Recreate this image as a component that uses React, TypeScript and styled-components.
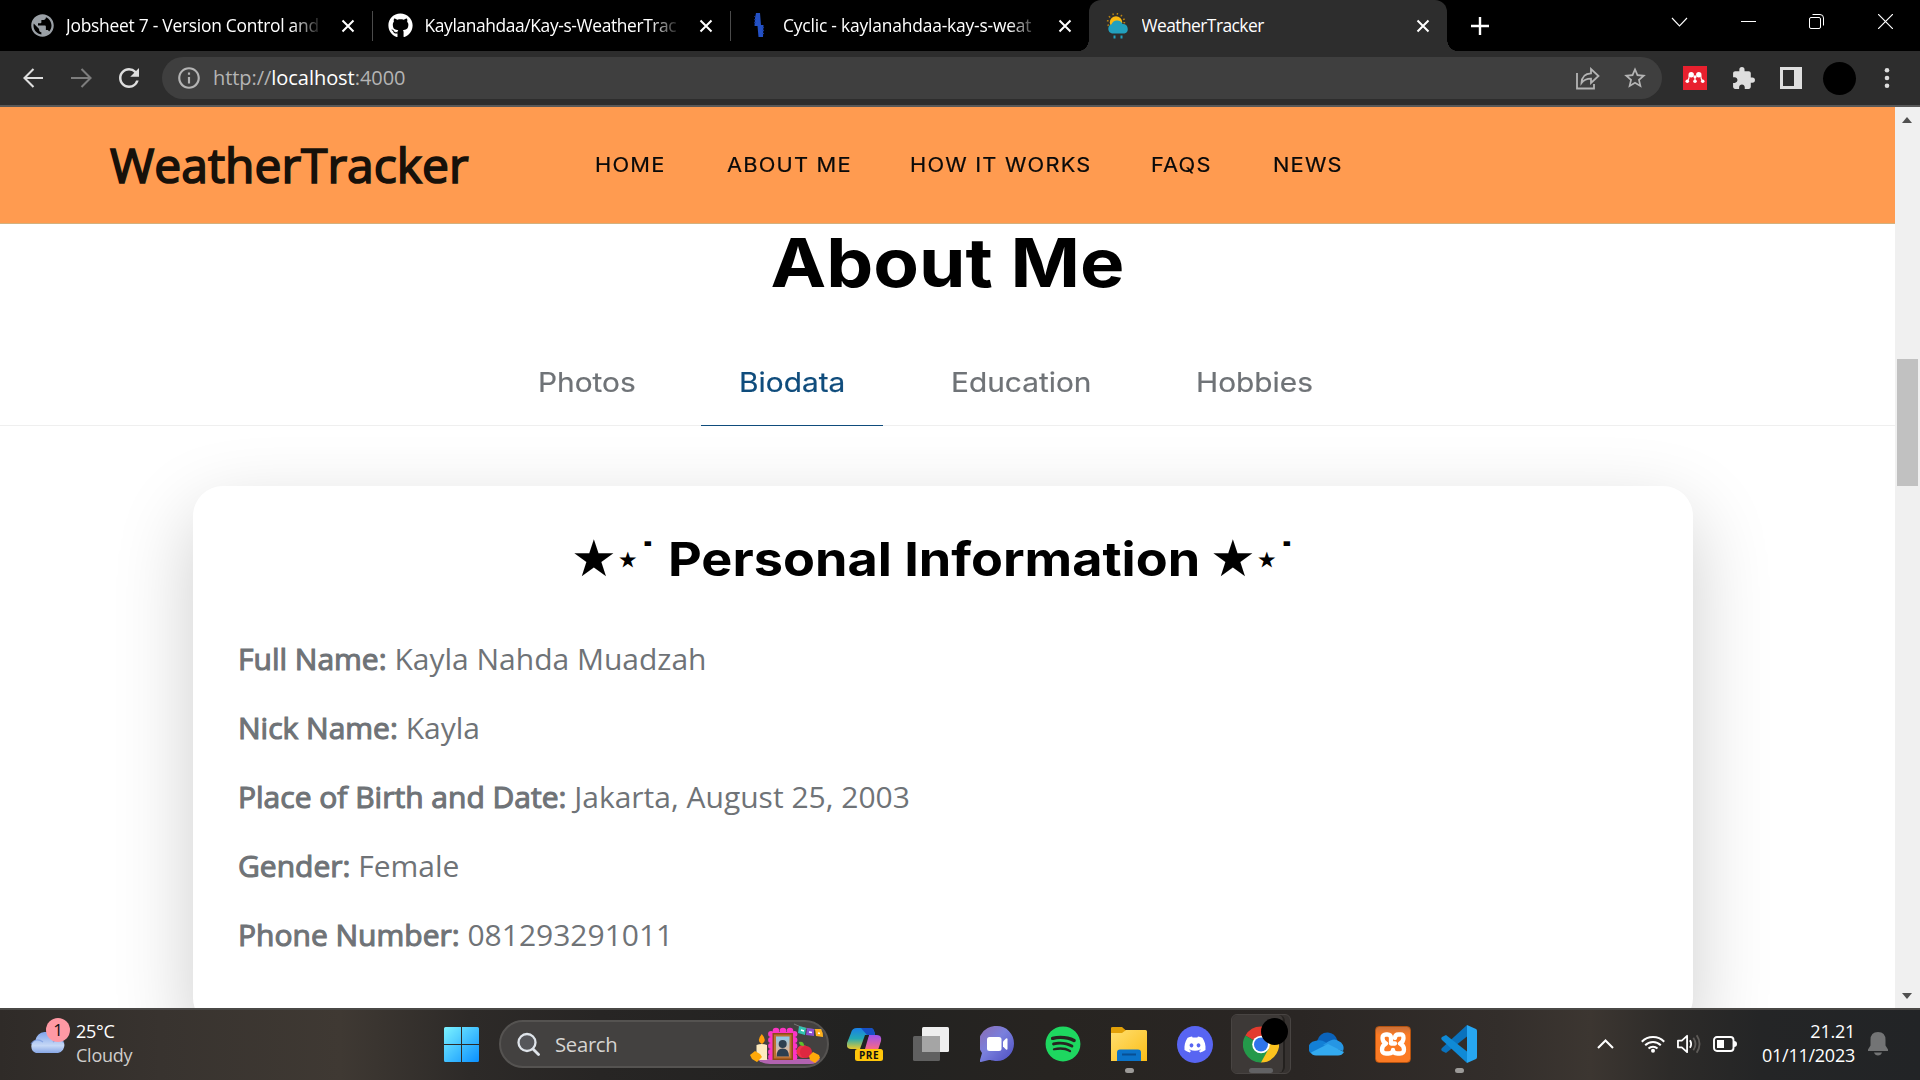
import React from "react";
import styled, { createGlobalStyle, css } from "styled-components";
import { FaGithub, FaSpotify, FaDiscord } from "react-icons/fa";
import { MdPublic, MdExtension, MdRefresh, MdStarBorder, MdInfoOutline } from "react-icons/md";

const ui = `"Open Sans", "Noto Sans", sans-serif`;
const display = `Inter, "Noto Sans", sans-serif`;

const GlobalStyle = createGlobalStyle`
  * { box-sizing: border-box; }
  html, body { margin: 0; padding: 0; background: #000; overflow: hidden; }
  svg { display: block; flex: none; }
`;

const Screen = styled.div`
  width: 1920px;
  height: 1080px;
  display: flex;
  flex-direction: column;
  overflow: hidden;
  font-family: ${ui};
`;

/* ---------- browser chrome ---------- */

const TabStrip = styled.div`
  height: 51px;
  flex: none;
  display: flex;
  background: #000;
  color: #fff;
  padding-left: 13px;
`;

const BrowserTab = styled.div<{ $active?: boolean; $rule?: boolean }>`
  position: relative;
  width: 358.5px;
  height: 51px;
  flex: none;
  display: flex;
  align-items: center;
  padding: 0 17px 0 15px;
  ${(p) =>
    p.$active &&
    css`
      background: #2d2d2d;
      border-radius: 12px 12px 0 0;
      &::before,
      &::after {
        content: "";
        position: absolute;
        bottom: 0;
        width: 10px;
        height: 12px;
      }
      &::before {
        left: -10px;
        background: radial-gradient(ellipse 10px 12px at 0 0, #000 97%, #2d2d2d);
      }
      &::after {
        right: -10px;
        background: radial-gradient(ellipse 10px 12px at 100% 0, #000 97%, #2d2d2d);
      }
    `}
  ${(p) =>
    p.$rule &&
    css`
      &::after {
        content: "";
        position: absolute;
        right: -1px;
        top: 11px;
        width: 1px;
        height: 30px;
        background: #4b4b4b;
      }
    `}
`;

const Favicon = styled.span`
  width: 28px;
  height: 28px;
  flex: none;
  display: flex;
  align-items: center;
  justify-content: center;
  margin-right: 10px;
`;

const TabTitle = styled.span<{ $fade?: boolean; $track: number }>`
  width: 260px;
  overflow: hidden;
  white-space: nowrap;
  font-size: 17.4px;
  letter-spacing: ${(p) => p.$track}px;
  line-height: 28px;
  margin: -1px 21px 0 0;
  ${(p) => p.$fade && css`mask-image: linear-gradient(90deg, #000 89%, rgba(0, 0, 0, 0.1) 100%);`}
`;

const NewTab = styled.div`
  width: 66px;
  display: flex;
  align-items: center;
  justify-content: center;
`;

const WindowControls = styled.div`
  margin-left: auto;
  height: 43px;
  display: flex;
`;

const WindowButton = styled.span`
  width: 68.7px;
  display: flex;
  align-items: center;
  justify-content: center;
`;

const Toolbar = styled.div`
  height: 56px;
  flex: none;
  display: flex;
  align-items: center;
  background: #2d2d2d;
  border-bottom: 2px solid #585858;
  padding: 0 20px 0 20px;
`;

const NavIcons = styled.div`
  display: flex;
  width: 142px;
  gap: 19px;
  align-items: center;
  color: #dedede;
`;

const AddressBar = styled.div`
  width: 1500px;
  height: 42px;
  flex: none;
  border-radius: 21px;
  background: #3f3f3f;
  display: flex;
  align-items: center;
  padding: 0 14px 0 14px;
  color: #b4b4b4;
`;

const Url = styled.span`
  flex: 1;
  margin-left: 11px;
  font-size: 20px;
  letter-spacing: -0.05px;
  line-height: 40px;
  white-space: nowrap;
  b {
    font-weight: 400;
    color: #fff;
  }
`;

const AddressActions = styled.span`
  display: flex;
  align-items: center;
  gap: 22px;
`;

const Extensions = styled.div`
  display: flex;
  align-items: center;
  margin-left: 21px;
  color: #dedede;
`;

const ExtensionSlot = styled.span<{ $w: number }>`
  width: ${(p) => p.$w}px;
  display: flex;
`;

const Avatar = styled.span`
  width: 33px;
  height: 33px;
  border-radius: 50%;
  background: #000;
`;

/* ---------- page ---------- */

const Viewport = styled.div`
  height: 901px;
  flex: none;
  display: flex;
  background: #fff;
  overflow: hidden;
`;

const Page = styled.div`
  width: 1895px;
  height: 901px;
  flex: none;
  overflow: hidden;
`;

const SiteHeader = styled.header`
  height: 117px;
  display: flex;
  align-items: center;
  background: #ff9b50;
  border-bottom: 1px solid #d3b27f;
  padding-left: 110px;
`;

const Logo = styled.div`
  width: 485px;
  font-size: 48px;
  line-height: 60px;
  color: #17110a;
  -webkit-text-stroke: 1.7px #17110a;
`;

const Nav = styled.nav`
  display: flex;
  gap: 61px;
`;

const NavLink = styled.a<{ $w: number }>`
  width: ${(p) => p.$w}px;
  font: 400 20px/30px ${display};
  letter-spacing: 1.1px;
  color: #0a0a0a;
  -webkit-text-stroke: 0.2px #0a0a0a;
  white-space: nowrap;
  transform: scaleX(1.09);
  transform-origin: left;
`;

const Title = styled.h1`
  margin: -1px 0 0;
  height: 121px;
  font: 700 67.5px/80px ${display};
  text-align: center;
  transform: scaleX(1.105);
  color: #000;
`;

const SectionTabs = styled.div`
  height: 82px;
  display: flex;
  gap: 30px;
  padding-left: 500px;
  border-bottom: 1px solid #efefef;
`;

const SectionTab = styled.div<{ $w: number; $active?: boolean }>`
  width: ${(p) => p.$w}px;
  height: 82px;
  padding-left: 37.5px;
  font: 400 27px/77px ${display};
  color: ${(p) => (p.$active ? "#0f4c7c" : "#6f7377")};
  border-bottom: 1px solid ${(p) => (p.$active ? "#0f4c7c" : "transparent")};
  -webkit-text-stroke: 0.2px currentColor;
  span {
    display: inline-block;
    transform: scaleX(1.105);
    transform-origin: left;
  }
`;

const Card = styled.section`
  width: 1500px;
  height: 542px;
  margin: 60px 0 0 193px;
  padding: 40px 45px;
  border-radius: 30px;
  background: #fff;
  box-shadow: 0 28px 80px rgba(0, 0, 0, 0.2);
`;

const CardHeading = styled.h2`
  margin: 0 0 32px;
  padding-left: 333px;
  height: 66px;
  display: flex;
  align-items: center;
  color: #000;
  white-space: nowrap;
  line-height: 66px;
`;

const HeadingText = styled.span`
  width: 542px;
  font: 700 47px/66px ${display};
  transform: scaleX(1.11);
  transform-origin: left;
`;

const BigStar = styled.span`
  width: 43px;
  font: 400 51px/66px "DejaVu Sans", sans-serif;
`;

const SmallStar = styled.span`
  width: 26px;
  font: 400 44px/66px "DejaVu Sans", sans-serif;
`;

const Dot = styled.span`
  width: 28px;
  font: 700 47px/66px "Liberation Sans", sans-serif;
`;

const Field = styled.p`
  margin: 0;
  height: 69px;
  font-size: 30px;
  line-height: 69px;
  font-weight: 400;
  color: #6f7377;
  white-space: nowrap;
  b {
    font-weight: 400;
    -webkit-text-stroke: 1.1px #6f7377;
  }
`;

const Scrollbar = styled.div`
  width: 25px;
  height: 901px;
  background: #f0f0f0;
  display: flex;
  flex-direction: column;
  align-items: center;
  padding: 10px 1px 9px 0;
`;

const Thumb = styled.div`
  width: 21px;
  height: 127px;
  margin: 236px 0 auto 1px;
  background: #c1c1c1;
`;

const Arrow = styled.span<{ $down?: boolean }>`
  width: 0;
  height: 0;
  border: 5.5px solid transparent;
  border-top-width: ${(p) => (p.$down ? 6 : 0)}px;
  border-bottom-width: ${(p) => (p.$down ? 0 : 6)}px;
  ${(p) => (p.$down ? "border-top-color" : "border-bottom-color")}: #505050;
`;

/* ---------- taskbar ---------- */

const Taskbar = styled.div`
  height: 72px;
  flex: none;
  display: flex;
  align-items: center;
  padding-bottom: 2px;
  border-top: 2px solid #4a4846;
  background: linear-gradient(
    90deg,
    #2f2b28 0, #38332f 160px, #3f3933 340px, #2d2a28 470px, #272524 600px, #222221 860px,
    #272421 1050px, #2a2624 1300px, #332e2b 1500px, #3c3631 1590px, #2d2b29 1670px, #242526 1760px, #222426 1920px
  );
  color: #fff;
`;

const Weather = styled.div`
  width: 429px;
  padding-left: 29px;
  display: flex;
`;

const WeatherIcon = styled.div`
  position: relative;
  width: 47px;
  height: 48px;
  margin-top: -2px;
`;

const Badge = styled.span`
  position: absolute;
  left: 17px;
  top: -1px;
  width: 24px;
  height: 24px;
  border-radius: 50%;
  background: #ff99a4;
  color: #111;
  text-align: center;
  font-size: 17px;
  line-height: 24px;
`;

const TwoLines = styled.div<{ $right?: boolean }>`
  margin-top: -2px;
  font-size: 18px;
  line-height: 24px;
  letter-spacing: -0.25px;
  text-align: ${(p) => (p.$right ? "right" : "left")};
  white-space: nowrap;
`;

const Muted = styled.div`
  color: #cfcdcb;
`;

const StartButton = styled.div`
  width: 70px;
  padding-left: 15px;
`;

const SearchBox = styled.div`
  width: 330px;
  height: 48px;
  border-radius: 24px;
  background: #434140;
  border: 2px solid #555351;
  display: flex;
  align-items: center;
  padding: 0 3px 0 16px;
  color: #d6d4d2;
  font-size: 20.3px;
  letter-spacing: -0.3px;
  span {
    flex: 1;
    margin: -1px 0 0 15px;
  }
`;

const Apps = styled.div`
  display: flex;
  margin-left: 3px;
`;

const TaskbarApp = styled.div<{ $run?: "dot" | "bar" }>`
  position: relative;
  width: 66px;
  height: 60px;
  display: flex;
  align-items: center;
  justify-content: center;
  ${(p) =>
    p.$run &&
    css`
      &::after {
        content: "";
        position: absolute;
        bottom: 1px;
        left: calc(50% - ${p.$run === "dot" ? 4.5 : 12}px);
        width: ${p.$run === "dot" ? 9 : 24}px;
        height: 5px;
        border-radius: 3px;
        background: ${p.$run === "dot" ? "#9c9a98" : "#626264"};
      }
    `}
`;

const ActiveGroup = styled.div`
  width: 60px;
  height: 60px;
  border-radius: 6px;
  border: 1px solid #484442;
  background: #363230;
  display: flex;
`;

const ActiveFront = styled.div`
  width: 53px;
  height: 58px;
  border-radius: 6px;
  border-right: 2px solid #24211f;
  background: #3d3937;
  display: flex;
  align-items: center;
  padding-left: 11px;
`;

const ProfileBlob = styled.span`
  position: absolute;
  left: 33px;
  top: 4px;
  width: 27px;
  height: 27px;
  border-radius: 50%;
  background: #000;
`;

const Tray = styled.div`
  margin-left: auto;
  padding-right: 32px;
  display: flex;
  align-items: center;
`;

const TrayIcons = styled.div`
  display: flex;
  align-items: center;
  gap: 12px;
  margin: 0 25px 0 27px;
`;

const BellSlot = styled.div`
  margin-left: 13px;
`;

/* ---------- drawings ---------- */

const Cross = () => (
  <svg width="14" height="14" viewBox="0 0 14 14" stroke="#fff" strokeWidth="2" fill="none">
    <path d="M1.5 1.5l11 11M12.5 1.5l-11 11" />
  </svg>
);

const ArrowIcon = ({ dim }: { dim?: boolean }) => (
  <svg width="28" height="24" viewBox="0 0 28 24" stroke={dim ? "#7d7d7d" : "#dedede"} strokeWidth="2.1" fill="none">
    <path d={dim ? "M4 12h18.5M14.5 3l9 9-9 9" : "M23 12H4.500M13.500 3l-9 9 9 9"} />
  </svg>
);

const CyclicIcon = () => (
  <svg width="12" height="25" viewBox="0 0 12 25">
    <path d="M3 0h4l1 12h2.500l-.5 12H5.500L4.500 13H1.500L2 5z" fill="#2350c4" />
    <path d="M2 3v9M10.300 14v8" stroke="#1b3a94" strokeWidth="1.500" strokeDasharray="1 2" />
  </svg>
);

const SunRainIcon = () => (
  <svg width="24" height="26" viewBox="0 0 24 26">
    <circle cx="10" cy="9" r="8.300" fill="none" stroke="#b98414" strokeWidth="1.800" strokeDasharray="1.400 3" />
    <circle cx="10" cy="9.500" r="6.200" fill="#fbb910" />
    <path d="M6 20.500a4.800 4.800 0 01-.5-9.200 6 6 0 0111-.3 4.900 4.900 0 012 9.500z" fill="#22a0bd" />
    <path d="M8.500 22.500v3M15.500 22.500v3" stroke="#22a0bd" strokeWidth="2" />
  </svg>
);

const ShareIcon = () => (
  <svg width="24" height="23" viewBox="0 0 24 23" fill="none" stroke="#b4b4b4" strokeWidth="1.8">
    <path d="M1 6v15.500h17V17" />
    <path d="M15 2v4.300C9 6.500 5.800 10 5.500 16c2.500-3.500 5.500-4.300 9.500-4.300V16l7.500-7z" />
  </svg>
);

const MendeleyIcon = () => (
  <svg width="24" height="24" viewBox="0 0 24 24">
    <path fill="#e8202e" d="M0 0h24v24H0z" />
    <g fill="#fff">
      <circle cx="8.200" cy="8.800" r="2.700" />
      <circle cx="15.800" cy="8.800" r="2.700" />
      <circle cx="12" cy="10.800" r="1.600" />
      <circle cx="4.300" cy="15.300" r="1.800" />
      <circle cx="12" cy="15.300" r="1.800" />
      <circle cx="19.700" cy="15.300" r="1.800" />
    </g>
    <path d="M4.500 15Q6.300 13 6.200 9.500M12 15v-4M19.500 15Q17.700 13 17.800 9.500" stroke="#fff" strokeWidth="1.100" fill="none" />
  </svg>
);

const PanelIcon = () => (
  <svg width="22" height="22" viewBox="0 0 22 22">
    <path fill="#dedede" d="M0 0h22v22H0z" />
    <path fill="#2d2d2d" d="M3 3h11v16H3z" />
  </svg>
);

const DotsIcon = () => (
  <svg width="6" height="22" viewBox="0 0 6 22" fill="#dedede">
    <circle cx="3" cy="3.200" r="2.300" />
    <circle cx="3" cy="11" r="2.300" />
    <circle cx="3" cy="18.700" r="2.300" />
  </svg>
);

const CloudIcon = () => (
  <svg width="36" height="48" viewBox="0 0 36 48">
    <defs>
      <linearGradient id="cloud" x1="0" y1="0" x2="0" y2="1">
        <stop offset="0" stopColor="#7ea3ea" />
        <stop offset=".65" stopColor="#c6d8f6" />
        <stop offset="1" stopColor="#87a7e6" />
      </linearGradient>
    </defs>
    <path d="M7 34a7 7 0 01-.5-13A10.500 10.500 0 0126 18.500 7.800 7.800 0 0129 34z" fill="url(#cloud)" />
    <path d="M2 25c3-5 8-5 12-2M24 23c4-4 8-3 11 1" stroke="#7698df" strokeWidth="1.200" fill="none" opacity=".7" />
  </svg>
);

const WindowsIcon = () => (
  <svg width="35" height="35" viewBox="0 0 35 35">
    <defs>
      <linearGradient id="win" x1="0" y1="0" x2="35" y2="35" gradientUnits="userSpaceOnUse">
        <stop offset="0" stopColor="#7cf3ff" />
        <stop offset="1" stopColor="#0a90ff" />
      </linearGradient>
    </defs>
    <path fill="url(#win)" d="M1.500 0H17v17H0V1.500A1.500 1.500 0 011.500 0zM18 0h15.500A1.500 1.500 0 0135 1.500V17H18zM0 18h17v17H1.500A1.500 1.500 0 010 33.500zM18 18h17v15.500a1.500 1.500 0 01-1.500 1.500H18z" />
  </svg>
);

const OfrendaArt = () => (
  <svg width="74" height="42" viewBox="0 0 74 42">
    <defs>
      <linearGradient id="photo" x1="0" y1="0" x2="0" y2="1">
        <stop offset="0" stopColor="#8bc8ea" />
        <stop offset="1" stopColor="#ffb07c" />
      </linearGradient>
    </defs>
    <path d="M8 36h56l6 0q-3 5-10 5H20Q9 40 8 36z" fill="#b263b0" />
    <g fill="#fb35c3">
      {[9, 15, 21, 27, 32].map((y) => (
        <g key={y}>
          <circle cx="21" cy={y + 2} r="2.900" />
          <circle cx="44.500" cy={y + 2} r="2.900" />
        </g>
      ))}
      {[26, 33, 40].map((x) => <circle key={x} cx={x} cy="8" r="3.300" />)}
      <path d="M21 9h23v27H21z" />
    </g>
    <path d="M22.500 10h20.500v27h-20.500z" fill="#8d4a16" />
    <path d="M24 11.500h17.500v24H24z" fill="#bd7130" />
    <path d="M26 13.500h13.500v20H26z" fill="url(#photo)" />
    <circle cx="32.700" cy="21" r="4" fill="#2d3f50" />
    <path d="M26.500 33.500q0-8 6.200-8t6.300 8z" fill="#2d3f50" />
    <path d="M6.500 22q5-2 10.500 0v15H6.500z" fill="#fdebc0" />
    <path d="M11.800 11q6 7 0 10-6-3 0-10z" fill="#ff9d0a" />
    <circle cx="53" cy="28.500" r="6.500" fill="#ee3148" />
    <circle cx="56" cy="29" r="6" fill="#dd2740" />
    <path d="M54 23q0-5-5-4 0 4 5 4z" fill="#5fbf2c" />
    <path d="M0 32l5-4 5 3 2 3-5 5-5-3zM59 33l4-4 6 3 1 3-5 5-5-3z" fill="#ffa90a" />
    <path d="M44 1q12 6 28 6" stroke="#777" strokeWidth="1" fill="none" />
    <path d="M49 3l7 2-1 7-7-2z" fill="#2fc4b2" />
    <path d="M57 5l7 1v7l-8-1z" fill="#8a4fd0" />
    <path d="M65 6l6 0q2 3 2 8l-7-1z" fill="#ffb21c" />
    <path d="M51 7l3 1M59 9l3 .5M68 10l2 .5" stroke="#fff" strokeWidth="1.500" />
  </svg>
);

const SearchIcon = () => (
  <svg width="23" height="24" viewBox="0 0 23 24" fill="none" stroke="#dfe4ea" strokeWidth="2.300" strokeLinecap="round">
    <circle cx="10" cy="10.500" r="8.500" fill="#55565a" />
    <path d="M16 17l5.500 5.500" strokeWidth="2.800" />
  </svg>
);

const CopilotIcon = () => (
  <svg width="36" height="34" viewBox="0 0 36 34">
    <defs>
      <linearGradient id="cop1" x1="0" y1="0" x2="0" y2="1">
        <stop offset="0" stopColor="#1a7fe8" />
        <stop offset=".5" stopColor="#23a9b5" />
        <stop offset="1" stopColor="#e8c92e" />
      </linearGradient>
      <linearGradient id="cop2" x1="0" y1="0" x2="0" y2="1">
        <stop offset="0" stopColor="#9d52ee" />
        <stop offset="1" stopColor="#ff6a7e" />
      </linearGradient>
    </defs>
    <path d="M10 1h14q3 0 4 7h-6q-3 0-4 4l-3 10H4q-5 0-4-6l4-10q1-5 6-5z" fill="url(#cop1)" />
    <path d="M14 1h10q3 0 4 7h-8z" fill="#174fc4" />
    <path d="M22 8h8q5 0 4 6l-3 9H15z" fill="url(#cop2)" />
    <path d="M18 8h4l-4 14h-5z" fill="#222" />
    <rect x="8" y="22" width="28" height="12" rx="2.500" fill="#ffc60a" />
    <text x="22" y="31.500" fontFamily="Open Sans, sans-serif" fontSize="10" fontWeight="700" letterSpacing=".5" textAnchor="middle" fill="#111">PRE</text>
  </svg>
);

const TaskViewIcon = () => (
  <svg width="36" height="34" viewBox="0 0 36 34">
    <rect x="9" y="0" width="27" height="25" rx="1.500" fill="#efefef" />
    <rect x="0" y="9" width="27" height="25" rx="1.500" fill="#606060" />
    <path d="M9 9h18v16H9z" fill="#a5a5a5" />
  </svg>
);

const ChatIcon = () => (
  <svg width="34" height="36" viewBox="0 0 34 36">
    <defs>
      <linearGradient id="chat" x1="0" y1="0" x2="1" y2="1">
        <stop offset="0" stopColor="#8c6bb0" />
        <stop offset=".45" stopColor="#7a80dd" />
        <stop offset="1" stopColor="#4c4cc0" />
      </linearGradient>
    </defs>
    <path d="M17 0a17 17.500 0 110 35c-5 0-6-1-8-1l-8 2q-2 0-1-2l2-7A17 17 0 0117 0z" fill="url(#chat)" />
    <rect x="7" y="11" width="14.500" height="14" rx="2.500" fill="#fff" />
    <path d="M23 15.500l3-3q1.500-1 1.500 1v9q0 2-1.500 1l-3-3z" fill="#fff" />
  </svg>
);

const FolderIcon = () => (
  <svg width="36" height="34" viewBox="0 0 36 34">
    <defs>
      <linearGradient id="fold" x1="0" y1="0" x2="1" y2="1">
        <stop offset="0" stopColor="#ffdf70" />
        <stop offset="1" stopColor="#fbbd17" />
      </linearGradient>
    </defs>
    <path d="M0 1q0-1 1.500-1H11l4 3.500v5H0z" fill="#e2a008" />
    <path d="M0 6h11l4-3h19.500Q36 3 36 4.500V34H0z" fill="url(#fold)" />
    <path d="M6 34V25.500q0-3 3-3h18q3 0 3 3V34z" fill="#0b73c9" />
    <path d="M11 27.500h14" stroke="#084f93" strokeWidth="2" />
  </svg>
);

const ChromeIcon = () => (
  <svg width="36" height="37" viewBox="0 0 36 36">
    <path d="M18 18L2.400 9A18 18 0 0133.600 9z" fill="#e33b2e" />
    <path d="M18 18L2.400 9A18 18 0 0018 36l8-13.500z" fill="#24994a" />
    <path d="M18 18l15.600-9A18 18 0 0118 36z" fill="#fcc31e" />
    <path d="M18 9h15.600L18 10z" fill="#e33b2e" />
    <path d="M25.500 22.500L18 36l-4-1 6-12z" fill="#24994a" />
    <circle cx="18" cy="18" r="8.800" fill="#fff" />
    <circle cx="18" cy="18" r="7" fill="#2f74ea" />
  </svg>
);

const OneDriveIcon = () => (
  <svg width="36" height="24" viewBox="0 0 36 24">
    <path d="M8 9Q11 0 19 .5q7 .5 9.500 8L17 17z" fill="#0b63bb" />
    <path d="M7 23a7 7 0 01-1-14q6-2 10 1l12 8-6 5z" fill="#1380d6" />
    <path d="M17 11q8-6 12.500-2A7.500 7.500 0 0134 19L14 13z" fill="#2696e4" />
    <path d="M7 23.500q-4 0-5-3L19 12l16 8q-2 3.500-6 3.500z" fill="#33aaf0" />
  </svg>
);

const XamppTile = styled.span`
  width: 36px;
  height: 37px;
  border-radius: 4px;
  border: 1px solid #b4520f;
  background: linear-gradient(#c9703a 0, #fb7a24 22%, #fb7a24 100%);
  display: flex;
  align-items: center;
  justify-content: center;
`;

const XamppGlyph = () => (
  <svg width="28" height="24" viewBox="0 0 28 24" fill="none" stroke="#fff" strokeWidth="4.300" strokeLinejoin="round" strokeLinecap="round">
    <path d="M12 10.500V6Q12 2.500 8.500 2.500H7Q3.500 2.500 3.500 6q0 4 3.500 5.500Q3 13.500 3 17.500t4 4h2.500q4.500 0 4.500-3.500 0 3.500 4.500 3.500H21q4 0 4-4t-4-6q3.500-1.500 3.500-5.500T21 2.500h-1.500Q16 2.500 16 6" />
    <path d="M12 11.500h4" />
  </svg>
);

const VsCodeIcon = () => (
  <svg width="36" height="38" viewBox="0 0 36 38">
    <path d="M26 0v11.500L5 28 1 26q-1.500-1.500 0-3z" fill="#0a72bd" />
    <path d="M26 38V26.500L5 10l-4 2q-1.500 1.500 0 3z" fill="#0f8ad6" />
    <path d="M26 0l9 4q1 .5 1 2v26q0 1.500-1 2l-9 4z" fill="#27a7f2" />
  </svg>
);

const Chevron = ({ down }: { down?: boolean }) => (
  <svg width="17" height="10" viewBox="0 0 17 10" fill="none" stroke="#fff" strokeWidth={down ? 1.1 : 2.1}>
    <path d={down ? "M1 1l7.500 8L16 1" : "M1 9l7.500-7.500L16 9"} />
  </svg>
);

const WifiIcon = () => (
  <svg width="24" height="18" viewBox="0 0 24 18" fill="none" stroke="#fff" strokeWidth="2">
    <path d="M.8 6.800a15.500 15.500 0 0122.400 0M4.200 10.200a11 11 0 0115.600 0M7.500 13.500a6.500 6.500 0 019 0" />
    <circle cx="12" cy="15.800" r="2" fill="#fff" stroke="none" />
  </svg>
);

const SoundIcon = () => (
  <svg width="24" height="20" viewBox="0 0 25 20" fill="none" stroke="#fff" strokeWidth="1.900" strokeLinejoin="round">
    <path d="M1 6.500h4l5.500-5v17L5 13.500H1z" />
    <path d="M13.500 6q2.500 4 0 8" />
    <path d="M17 3.500q4.500 6.500 0 13M20.500 1q6 9 0 18" stroke="#5f5c59" />
  </svg>
);

const BatteryIcon = () => (
  <svg width="24" height="16" viewBox="0 0 24 16">
    <rect x="1" y="1" width="19.500" height="14" rx="3" fill="none" stroke="#fff" strokeWidth="1.900" />
    <path d="M4 4h7v8H4zM21 5q3 0 3 3t-3 3z" fill="#fff" />
  </svg>
);

const BellIcon = () => (
  <svg width="20" height="24" viewBox="0 0 20 24" fill="#737475">
    <path d="M10 0q7.500 0 7.500 8v5.500l2.500 4V19H0v-1.500l2.500-4V8Q2.500 0 10 0zM6 20.500h8q-1 3-4 3t-4-3z" />
  </svg>
);

/* ---------- data ---------- */

const tabs = [
  { title: "Jobsheet 7 - Version Control and", icon: <MdPublic size={27} color="#9aa0a6" />, fade: true, rule: true, track: -0.25 },
  { title: "Kaylanahdaa/Kay-s-WeatherTrac", icon: <FaGithub size={25} />, fade: true, rule: true, track: -0.38 },
  { title: "Cyclic - kaylanahdaa-kay-s-weat", icon: <CyclicIcon />, fade: true, track: -0.18 },
  { title: "WeatherTracker", icon: <SunRainIcon />, active: true, track: -0.55 },
];

const links: [string, number][] = [["HOME", 71], ["ABOUT ME", 122], ["HOW IT WORKS", 180], ["FAQS", 61], ["NEWS", 70]];

const sections: [string, number][] = [["Photos", 171], ["Biodata", 182], ["Education", 215], ["Hobbies", 189]];

const fields = [
  ["Full Name:", "Kayla Nahda Muadzah"],
  ["Nick Name:", "Kayla"],
  ["Place of Birth and Date:", "Jakarta, August 25, 2003"],
  ["Gender:", "Female"],
  ["Phone Number:", "081293291011"],
];

const Sparkles = () => (
  <>
    <BigStar>★</BigStar>
    <SmallStar>⋆</SmallStar>
    <Dot>˙</Dot>
  </>
);

export default function App() {
  return (
    <Screen>
      <GlobalStyle />
      <TabStrip>
        {tabs.map((t) => (
          <BrowserTab key={t.title} $active={t.active} $rule={t.rule}>
            <Favicon>{t.icon}</Favicon>
            <TabTitle $fade={t.fade} $track={t.track}>{t.title}</TabTitle>
            <Cross />
          </BrowserTab>
        ))}
        <NewTab>
          <svg width="18" height="18" viewBox="0 0 18 18" stroke="#fff" strokeWidth="2.400">
            <path d="M9 0v18M0 9h18" />
          </svg>
        </NewTab>
        <WindowControls>
          <WindowButton><Chevron down /></WindowButton>
          <WindowButton>
            <svg width="15" height="1" viewBox="0 0 15 1"><path fill="#fff" d="M0 0h15v1H0z" /></svg>
          </WindowButton>
          <WindowButton>
            <svg width="15" height="15" viewBox="0 0 15 15" fill="none" stroke="#fff">
              <rect x=".5" y="3.500" width="11" height="11" rx="1.500" />
              <path d="M3.500 .5H11Q14.500 .5 14.500 4v7.500" />
            </svg>
          </WindowButton>
          <WindowButton>
            <svg width="15" height="15" viewBox="0 0 15 15" stroke="#fff" strokeWidth="1.200"><path d="M0 0l15 15M15 0L0 15" /></svg>
          </WindowButton>
        </WindowControls>
      </TabStrip>

      <Toolbar>
        <NavIcons>
          <ArrowIcon />
          <ArrowIcon dim />
          <MdRefresh size={30} />
        </NavIcons>
        <AddressBar>
          <MdInfoOutline size={26} />
          <Url>http://<b>localhost</b>:4000</Url>
          <AddressActions>
            <ShareIcon />
            <MdStarBorder size={26} />
          </AddressActions>
        </AddressBar>
        <Extensions>
          <ExtensionSlot $w={48}><MendeleyIcon /></ExtensionSlot>
          <ExtensionSlot $w={49}><MdExtension size={25} /></ExtensionSlot>
          <ExtensionSlot $w={43}><PanelIcon /></ExtensionSlot>
          <ExtensionSlot $w={61}><Avatar /></ExtensionSlot>
          <DotsIcon />
        </Extensions>
      </Toolbar>

      <Viewport>
        <Page>
          <SiteHeader>
            <Logo>WeatherTracker</Logo>
            <Nav>{links.map(([l, w]) => <NavLink key={l} $w={w}>{l}</NavLink>)}</Nav>
          </SiteHeader>
          <Title>About Me</Title>
          <SectionTabs>
            {sections.map(([s, w]) => (
              <SectionTab key={s} $w={w} $active={s === "Biodata"}><span>{s}</span></SectionTab>
            ))}
          </SectionTabs>
          <Card>
            <CardHeading>
              <Sparkles />
              <HeadingText>Personal Information</HeadingText>
              <Sparkles />
            </CardHeading>
            {fields.map(([k, v]) => (
              <Field key={k}><b>{k}</b> {v}</Field>
            ))}
          </Card>
        </Page>
        <Scrollbar>
          <Arrow />
          <Thumb />
          <Arrow $down />
        </Scrollbar>
      </Viewport>

      <Taskbar>
        <Weather>
          <WeatherIcon>
            <CloudIcon />
            <Badge>1</Badge>
          </WeatherIcon>
          <TwoLines>
            <div>25°C</div>
            <Muted>Cloudy</Muted>
          </TwoLines>
        </Weather>
        <StartButton><WindowsIcon /></StartButton>
        <SearchBox>
          <SearchIcon />
          <span>Search</span>
          <OfrendaArt />
        </SearchBox>
        <Apps>
          <TaskbarApp><CopilotIcon /></TaskbarApp>
          <TaskbarApp><TaskViewIcon /></TaskbarApp>
          <TaskbarApp><ChatIcon /></TaskbarApp>
          <TaskbarApp><FaSpotify size={36} color="#1ed760" /></TaskbarApp>
          <TaskbarApp $run="dot"><FolderIcon /></TaskbarApp>
          <TaskbarApp>
            <svg width="36" height="37" viewBox="0 0 36 37">
              <ellipse cx="18" cy="18.500" rx="18" ry="18.500" fill="#5865f2" />
              <FaDiscord x="6.500" y="7" size={23} color="#fff" />
            </svg>
          </TaskbarApp>
          <TaskbarApp $run="bar">
            <ActiveGroup><ActiveFront><ChromeIcon /></ActiveFront></ActiveGroup>
            <ProfileBlob />
          </TaskbarApp>
          <TaskbarApp><OneDriveIcon /></TaskbarApp>
          <TaskbarApp><XamppTile><XamppGlyph /></XamppTile></TaskbarApp>
          <TaskbarApp $run="dot"><VsCodeIcon /></TaskbarApp>
        </Apps>
        <Tray>
          <Chevron />
          <TrayIcons>
            <WifiIcon />
            <SoundIcon />
            <BatteryIcon />
          </TrayIcons>
          <TwoLines $right>
            <div>21.21</div>
            <div>01/11/2023</div>
          </TwoLines>
          <BellSlot><BellIcon /></BellSlot>
        </Tray>
      </Taskbar>
    </Screen>
  );
}
